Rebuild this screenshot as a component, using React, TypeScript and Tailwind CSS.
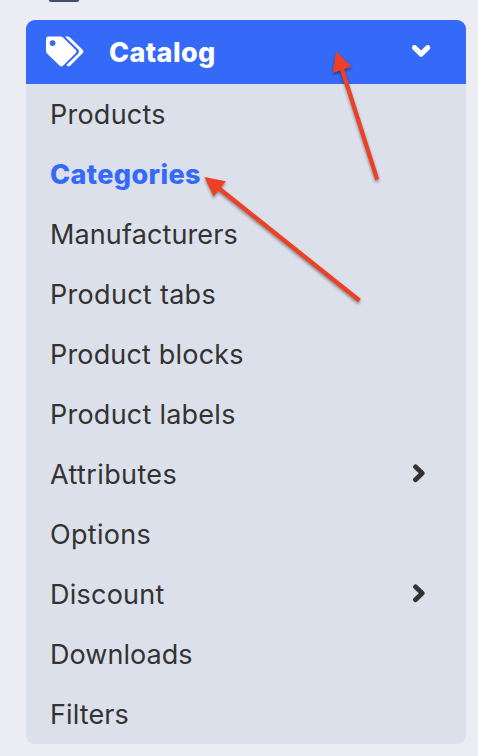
type Item = { label: string; tracking: string; active?: boolean; nested?: boolean };

const items: Item[] = [
  { label: "Products", tracking: "tracking-[0.24px]" },
  { label: "Categories", tracking: "tracking-[0.4px]", active: true },
  { label: "Manufacturers", tracking: "tracking-[0.12px]" },
  { label: "Product tabs", tracking: "tracking-[0.3px]" },
  { label: "Product blocks", tracking: "tracking-[0.17px]" },
  { label: "Product labels", tracking: "tracking-[0.24px]" },
  { label: "Attributes", tracking: "tracking-[0.38px]", nested: true },
  { label: "Options", tracking: "tracking-[0.3px]" },
  { label: "Discount", tracking: "tracking-[0.24px]", nested: true },
  { label: "Downloads", tracking: "tracking-[0.05px]" },
  { label: "Filters", tracking: "tracking-[0.1px]" },
];

function TagsIcon() {
  return (
    <svg className="mb-[2px]" width="38" height="31" viewBox="0 0 38 31" fill="currentColor">
      <path
        fillRule="evenodd"
        d="M2.6 .4H14.2Q15.8 .4 17 1.6L29.4 13.4Q31.4 15.5 29.4 17.6L17.2 29.6Q15.4 31.3 13.5 29.6L1 17.6Q0 16.6 0 15V3Q0 .4 2.6 .4ZM6.6 4.2A2.9 2.9 0 1 0 6.6 10A2.9 2.9 0 1 0 6.6 4.2Z"
      />
      <path d="M19.3 .4H21.6Q23 .4 24 1.4L36.4 13.4Q38.4 15.5 36.4 17.6L24.4 29.6Q22.8 31.1 21.2 29.8L20.4 29.1L31.8 17.9Q34.2 15.5 31.8 13.1L19.3 .9Z" />
    </svg>
  );
}

function ChevronDown() {
  return (
    <svg width="20" height="14" viewBox="0 0 20 14" fill="none" stroke="currentColor" strokeWidth="5" strokeLinecap="round" strokeLinejoin="round">
      <path d="M3.5 2.6L10.1 9.1L16.7 2.6" />
    </svg>
  );
}

function ChevronRight() {
  return (
    <svg width="14" height="20" viewBox="0 0 14 20" fill="none" stroke="currentColor" strokeWidth="4.8" strokeLinecap="round" strokeLinejoin="round">
      <path d="M3.5 2.8L10.2 9.3L3.5 15.8" />
    </svg>
  );
}

function Arrows() {
  return (
    <svg className="pointer-events-none absolute inset-0 drop-shadow-[0_2px_1.5px_rgba(0,0,0,0.4)]" width="478" height="756" viewBox="0 0 478 756" fill="#ed4024" stroke="#ed4024">
      <path d="M341 66L377.2 179.5M216 186L359.5 300.5" strokeWidth="4.2" />
      <path d="M336 51.3L351.4 66.8L332.8 73ZM204.5 177L225.8 181.2L213.6 196.6Z" stroke="none" />
    </svg>
  );
}

export default function App() {
  return (
    <div className="relative flex h-[756px] w-[478px] flex-col overflow-hidden bg-[#ecedf2] pl-[26px] pr-3 font-['Inter',sans-serif]">
      <div className="h-5">
        <div className="ml-[23px] h-[2px] w-[30px] rounded-b bg-[#434d72]" />
      </div>
      <nav className="h-[724px] overflow-hidden rounded-[9px] bg-[#dce0ea]">
        <div className="flex h-16 items-center bg-[#3569f7] pl-5 pr-[35px] text-white">
          <TagsIcon />
          <span className="ml-[25px] flex-1 pt-0.5 text-[27px] font-extrabold tracking-[0.4px]">Catalog</span>
          <ChevronDown />
        </div>
        <ul className="text-[27px] text-[#333]">
          {items.map(({ label, tracking, active, nested }) => (
            <li key={label} className={`flex h-[60px] items-center justify-between pl-6 pr-[40px] ${active ? "font-extrabold text-[#3569f7]" : ""}`}>
              <span className={`pt-0.5 ${tracking}`}>{label}</span>
              {nested && <ChevronRight />}
            </li>
          ))}
        </ul>
      </nav>
      <Arrows />
    </div>
  );
}
